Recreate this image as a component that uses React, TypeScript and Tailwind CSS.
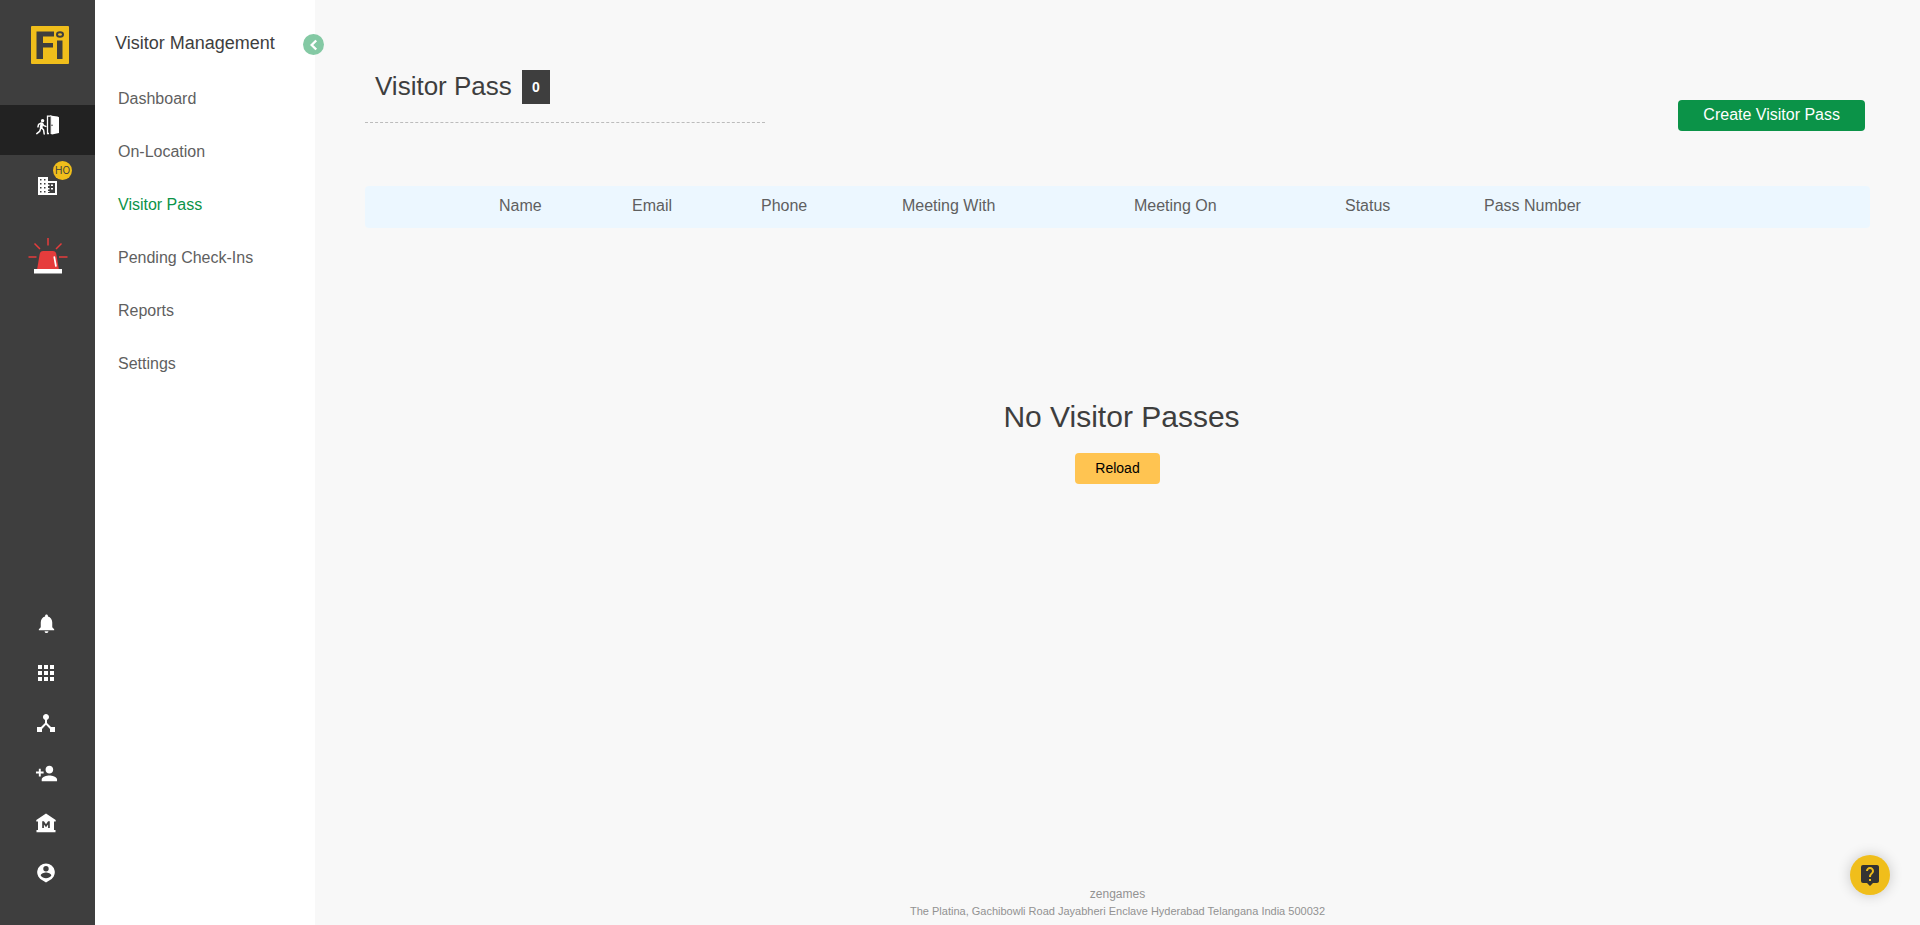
import React from "react";
import {
  MdApps,
  MdDeviceHub,
  MdLiveHelp,
  MdNotifications,
  MdPersonAdd,
} from "react-icons/md";

const menu = ["Dashboard", "On-Location", "Visitor Pass", "Pending Check-Ins", "Reports", "Settings"];

const columns = [
  { label: "", weight: 122 },
  { label: "Name", weight: 133 },
  { label: "Email", weight: 129 },
  { label: "Phone", weight: 141 },
  { label: "Meeting With", weight: 232 },
  { label: "Meeting On", weight: 211 },
  { label: "Status", weight: 139 },
  { label: "Pass Number", weight: 233 },
  { label: "", weight: 165 },
];
const totalWeight = columns.reduce((sum, c) => sum + c.weight, 0);

function Logo() {
  return (
    <svg viewBox="0 0 38 38" className="size-[38px]" aria-hidden="true">
      <rect width="38" height="38" rx="1" fill="#f0be1b" />
      <path fill="#3e3e3e" d="M5.500 5.500h17.500v5H12v6.500h10v4.500H12V33H5.500zM26 14.500h5.500V33H26z" />
      <ellipse cx="29" cy="8.500" rx="3" ry="2.300" fill="none" stroke="#3e3e3e" strokeWidth="2" />
    </svg>
  );
}

function DoorIcon() {
  return (
    <svg viewBox="0 0 24 20" className="h-5 w-6" fill="none" stroke="#fff" aria-hidden="true">
      <circle cx="6.600" cy="5.800" r="1.700" fill="#fff" stroke="none" />
      <path strokeWidth="2.800" d="M6 8L5 13" />
      <path
        strokeWidth="1.500"
        strokeLinecap="round"
        strokeLinejoin="round"
        d="M5.400 8L2.600 9.400 2 11.800M6.400 8.600l1.400 2 2 .8M5.400 12.600l2.200 2.400.6 4M4.800 13l-1.200 3.400-2.800 2.200"
      />
      <path strokeWidth="1.300" d="M15.500 1.200h-4V18.500h1.500" />
      <path fill="#fff" stroke="none" d="M14 .5l7.500 1 1.500.8V18l-7 1.600-2-1.400z" />
      <path stroke="#222" strokeWidth=".7" d="M14.600 1.500V18.500" />
      <circle cx="16" cy="10.300" r=".7" fill="#222" stroke="none" />
    </svg>
  );
}

function BuildingIcon() {
  return (
    <svg viewBox="0 0 19 18" className="h-[18px] w-[19px]" aria-hidden="true">
      <path fill="#fff" d="M0 0h10v4h9v14H0z" />
      <path
        fill="#3e3e3e"
        d="M2 2h1.500v1.500H2zM6 2h1.500v1.500H6zM2 6h1.500v1.500H2zM6 6h1.500v1.500H6zM2 10h1.500v1.500H2zM6 10h1.500v1.500H6zM2 14h1.500v1.500H2zM6 14h1.500v1.500H6zM10 6h7v10h-7z"
      />
      <path fill="#fff" d="M10 7.500h1.500V9H10zM13 7.500h2V9h-2zM10 11h1.500v1.500H10zM13 11h2v1.500h-2zM10 14h1.500v1H10z" />
    </svg>
  );
}

function SirenIcon() {
  return (
    <svg viewBox="0 0 40 36" className="h-9 w-10" aria-hidden="true">
      <path stroke="#e63c3c" strokeWidth="1.500" d="M20 0v7.500M6.500 5.500l5.500 5.500M33.500 5.500L28 11M.5 19h8M31 19h8.500" />
      <path fill="#e63c3c" d="M9 32l2.700-16q.6-3 3.500-3h9.600q2.900 0 3.500 3L31 32z" />
      <path stroke="#fff" strokeWidth="1.700" strokeLinecap="round" d="M26.300 19l1.600 9" />
      <rect x="6" y="31" width="28" height="4.500" fill="#fff" />
    </svg>
  );
}

function MuseumIcon() {
  return (
    <svg viewBox="0 0 20 20" className="size-5" fill="#fff" aria-hidden="true">
      <path
        fillRule="evenodd"
        d="M10 .5l9.700 6.500v1.500H18V17h1.500v2.200H.5V17H2V8.500H.3V7zM6.200 15h1.700v-3.600L10 14.200l2.100-2.800V15h1.700V8.300h-1.700L10 11.200 7.900 8.300H6.200z"
      />
    </svg>
  );
}

function ProfilePinIcon() {
  return (
    <svg viewBox="0 0 18 19" className="h-5 w-[18px]" aria-hidden="true">
      <path fill="#fff" d="M9 0a8.800 8.800 0 0 1 3.200 17L9 19l-3.200-2A8.800 8.800 0 0 1 9 0z" />
      <circle cx="9" cy="5.300" r="2.700" fill="#3e3e3e" />
      <path fill="#3e3e3e" d="M3.700 12c0-1.900 3.500-2.900 5.300-2.900s5.300 1 5.300 2.900a6.400 6.400 0 0 1-10.600 0z" />
    </svg>
  );
}

const tools = [
  { label: "Notifications", icon: <MdNotifications className="size-[23px]" /> },
  { label: "Apps", icon: <MdApps className="size-6" /> },
  { label: "Network", icon: <MdDeviceHub className="size-6" /> },
  { label: "Add person", icon: <MdPersonAdd className="size-[23px]" /> },
  { label: "Organisation", icon: <MuseumIcon /> },
  { label: "Profile", icon: <ProfilePinIcon /> },
];

export default function App() {
  return (
    <div className="flex min-h-screen bg-[#f8f8f8] font-['Liberation_Sans',Arial,sans-serif] text-[#3e3e3e]">
      <nav aria-label="Main" className="flex w-[95px] shrink-0 flex-col bg-[#3e3e3e] pb-[27px] text-white">
        <a href="#home" aria-label="Home" className="flex h-[105px] justify-center pt-[26px] pl-1">
          <Logo />
        </a>
        <a href="#visitors" aria-label="Visitors" className="flex h-[50px] justify-center bg-[#222] pt-[10px]">
          <DoorIcon />
        </a>
        <a href="#office" aria-label="Head office" className="relative flex h-[83px] justify-center pt-[22px]">
          <BuildingIcon />
          <span className="absolute top-[6px] left-[53px] flex size-[19px] items-center justify-center rounded-full bg-[#f0be1b] font-[Inter,sans-serif] text-[10px] text-[#3e3e3e]">
            HO
          </span>
        </a>
        <a href="#emergency" aria-label="Emergency" className="flex justify-center">
          <SirenIcon />
        </a>
        <div className="mt-auto flex flex-col">
          {tools.map((t) => (
            <button key={t.label} type="button" aria-label={t.label} className="flex h-[50px] items-center justify-center pr-[3px]">
              {t.icon}
            </button>
          ))}
        </div>
      </nav>

      <aside className="relative w-[220px] shrink-0 bg-white">
        <h2 className="pt-8 pl-5 text-lg leading-[22px]">Visitor Management</h2>
        <button
          type="button"
          aria-label="Collapse menu"
          className="absolute top-[34px] -right-[9px] flex size-[21px] items-center justify-center rounded-full bg-[#84c9a4] text-white"
        >
          <svg viewBox="0 0 12 12" className="size-3" fill="none" stroke="currentColor" strokeWidth="2.400" aria-hidden="true">
            <path d="M8.200 1.500L3.700 6l4.500 4.500" />
          </svg>
        </button>
        <ul className="pt-[18px]">
          {menu.map((m) => (
            <li key={m}>
              <a
                href={"#" + m}
                className={
                  m === "Visitor Pass"
                    ? "flex h-[53px] items-center pl-[23px] text-base text-[#0b9348]"
                    : "flex h-[53px] items-center pl-[23px] text-base text-[#5f5f5f]"
                }
              >
                {m}
              </a>
            </li>
          ))}
        </ul>
      </aside>

      <main className="flex min-w-0 flex-1 flex-col px-[50px]">
        <div className="flex items-end justify-between pt-[70px] pr-[5px]">
          <div className="flex w-[400px] items-start gap-[10px] border-b border-dashed border-[#bcbcbc] pb-[18px] pl-[10px]">
            <h1 className="text-[26px] leading-8">Visitor Pass</h1>
            <span className="flex h-[34px] w-7 items-center justify-center bg-[#3e3e3e] text-sm font-bold text-white">0</span>
          </div>
          <button type="button" className="-mb-2 h-[31px] rounded bg-[#0b9348] px-[25px] pb-[2px] text-base text-white">
            Create Visitor Pass
          </button>
        </div>

        <table className="mt-[63px] w-full table-fixed overflow-hidden rounded-sm bg-[#ecf7ff]">
          <thead>
            <tr className="h-[42px]">
              {columns.map((c, i) => (
                <th
                  key={i}
                  style={{ width: (c.weight / totalWeight) * 100 + "%" }}
                  className="px-3 pb-[2px] text-left text-base font-normal whitespace-nowrap text-[#5f5f5f]"
                >
                  {c.label}
                </th>
              ))}
            </tr>
          </thead>
        </table>

        <section className="flex flex-col items-center pt-[171px]">
          <h2 className="pl-2 text-[30px] leading-9">No Visitor Passes</h2>
          <button type="button" className="mt-[18px] h-[31px] w-[85px] rounded bg-[#ffc451] pb-px text-sm text-black">
            Reload
          </button>
        </section>

        <footer className="mt-auto pb-[6px] text-center text-[#929292]">
          <p className="text-xs leading-[18px]">zengames</p>
          <p className="text-[11px] leading-4">The Platina, Gachibowli Road Jayabheri Enclave Hyderabad Telangana India 500032</p>
        </footer>
      </main>

      <button
        type="button"
        aria-label="Help"
        className="fixed right-[30px] bottom-[30px] flex size-10 items-center justify-center rounded-full bg-[#f0be1b] text-[#333] shadow-[0_0_14px_rgba(0,0,0,0.2)]"
      >
        <MdLiveHelp className="size-6" />
      </button>
    </div>
  );
}
